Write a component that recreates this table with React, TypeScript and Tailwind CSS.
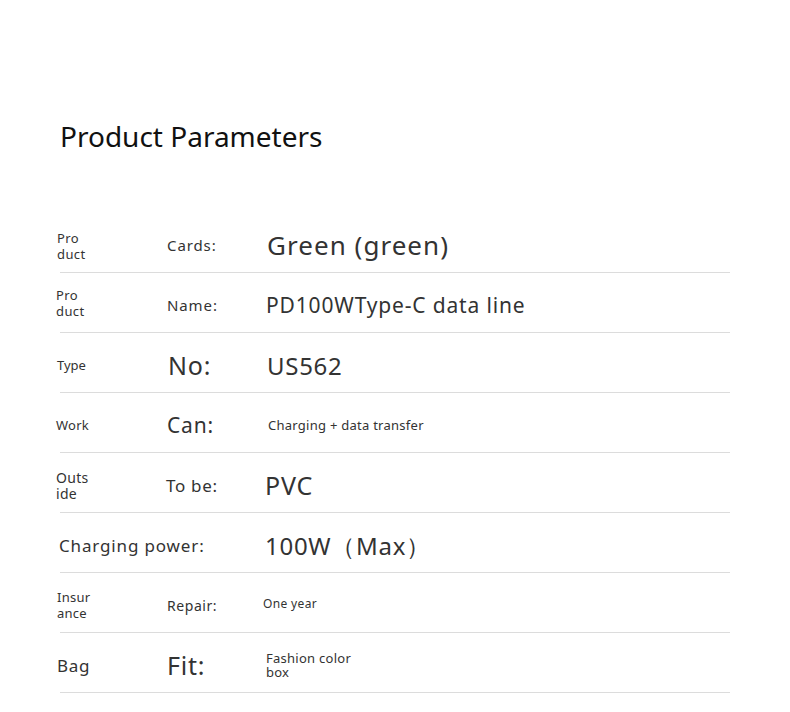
const rows = [
  {
    a: "Pro\nduct",
    aCls: "ml-[1px] text-[13px] leading-[16px] tracking-[0.03em]",
    b: "Cards:",
    bCls: "ml-[110px] text-[15px] tracking-[0.06em]",
    c: "Green (green)",
    cCls: "ml-[100px] text-[26px] tracking-[0.04em]",
  },
  {
    a: "Pro\nduct",
    aCls: "-mt-[6px] text-[13px] leading-[16px] tracking-[0.03em]",
    b: "Name:",
    bCls: "ml-[111px] text-[15px] tracking-[0.06em]",
    c: "PD100WType-C data line",
    cCls: "ml-[99px] text-[21px] tracking-[0.04em]",
  },
  {
    a: "Type",
    aCls: "ml-[1px] text-[13px]",
    b: "No:",
    bCls: "ml-[111px] text-[25px] tracking-[0.03em]",
    c: "US562",
    cCls: "ml-[99px] text-[24px] tracking-[0.03em]",
  },
  {
    a: "Work",
    aCls: "text-[13px] tracking-[0.02em]",
    b: "Can:",
    bCls: "ml-[111px] text-[21px] tracking-[0.04em]",
    c: "Charging + data transfer",
    cCls: "ml-[101px] text-[13px] tracking-[0.02em]",
  },
  {
    a: "Outs\nide",
    aCls: "text-[14px] leading-[16px] tracking-[0.02em]",
    b: "To be:",
    bCls: "ml-[110px] text-[17px] tracking-[0.04em]",
    c: "PVC",
    cCls: "ml-[99px] text-[25px] tracking-[0.03em]",
  },
  {
    a: "",
    aCls: "",
    b: "Charging power:",
    bCls: "ml-[3px] text-[17px] tracking-[0.05em]",
    c: "100W（Max）",
    cCls: "ml-[206px] text-[24px] tracking-[0.03em]",
  },
  {
    a: "Insur\nance",
    aCls: "ml-[1px] -mt-[2px] text-[13px] leading-[16px] tracking-[0.02em]",
    b: "Repair:",
    bCls: "ml-[110px] text-[14px] tracking-[0.04em]",
    c: "One year",
    cCls: "ml-[96px] -mt-[4px] text-[12px] tracking-[0.03em]",
  },
  {
    a: "Bag",
    aCls: "ml-[1px] text-[17px] tracking-[0.04em]",
    b: "Fit:",
    bCls: "ml-[110px] text-[25px] tracking-[0.03em]",
    c: "Fashion color\nbox",
    cCls: "ml-[99px] -mt-[2px] text-[13px] leading-[14px] tracking-[0.02em]",
  },
];

function Row({ row }: { row: (typeof rows)[number] }) {
  return (
    <div>
      <div className="flex h-[59px] items-center pt-[6px] text-[#333]">
        {row.a ? (
          <div className={`w-0 whitespace-pre ${row.aCls}`}>{row.a}</div>
        ) : null}
        <div className={`w-0 whitespace-pre ${row.bCls}`}>{row.b}</div>
        <div className={`w-0 whitespace-pre ${row.cCls}`}>{row.c}</div>
      </div>
      <div className="ml-[4px] h-px w-[670px] bg-[#dcdcdc]" />
    </div>
  );
}

export default function App() {
  return (
    <main
      className="h-[712px] w-[790px] overflow-hidden bg-white"
      style={{ fontFamily: '"Noto Sans", "Open Sans", sans-serif' }}
    >
      <h1 className="ml-[60px] pt-[112px] text-[28px] leading-[48px] text-[#111]">
        Product Parameters
      </h1>
      <div className="ml-[56px] mt-[53px]">
        {rows.map((row, i) => (
          <Row key={i} row={row} />
        ))}
      </div>
    </main>
  );
}
